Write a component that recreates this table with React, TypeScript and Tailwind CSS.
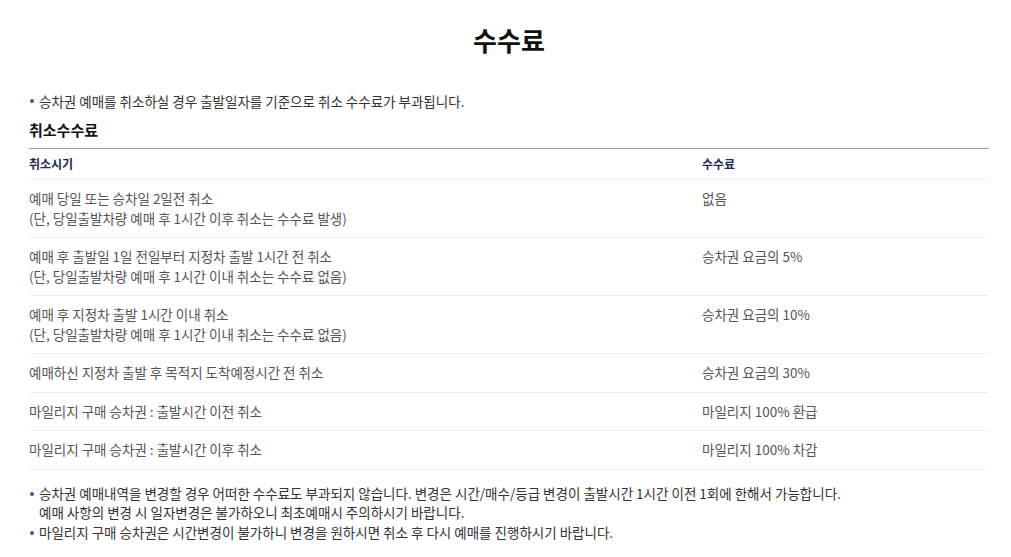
import React from "react";

const rows: { when: string[]; fee: string }[] = [
  { when: ["예매 당일 또는 승차일 2일전 취소", "(단, 당일출발차량 예매 후 1시간 이후 취소는 수수료 발생)"], fee: "없음" },
  { when: ["예매 후 출발일 1일 전일부터 지정차 출발 1시간 전 취소", "(단, 당일출발차량 예매 후 1시간 이내 취소는 수수료 없음)"], fee: "승차권 요금의 5%" },
  { when: ["예매 후 지정차 출발 1시간 이내 취소", "(단, 당일출발차량 예매 후 1시간 이내 취소는 수수료 없음)"], fee: "승차권 요금의 10%" },
  { when: ["예매하신 지정차 출발 후 목적지 도착예정시간 전 취소"], fee: "승차권 요금의 30%" },
  { when: ["마일리지 구매 승차권 : 출발시간 이전 취소"], fee: "마일리지 100% 환급" },
  { when: ["마일리지 구매 승차권 : 출발시간 이후 취소"], fee: "마일리지 100% 차감" },
];

function Bullet({ children }: { children: React.ReactNode }) {
  return (
    <div className="relative pl-[10px]">
      <span className="absolute left-[1px] top-[8px] w-[4px] h-[4px] rounded-full bg-[#2b5aa6]" />
      {children}
    </div>
  );
}

export default function App() {
  return (
    <div
      className="w-[1011px] h-[557px] bg-white overflow-hidden text-[#333]"
      style={{ fontFamily: '"Noto Sans CJK KR", "Noto Sans", sans-serif' }}
    >
      <div className="pl-[29px] pr-[22px]">
        <h1 className="text-center text-[26px] font-bold text-[#111] leading-[36px] pt-[22px]">수수료</h1>
        <div className="mt-[33px] text-[13.5px] leading-[20px]">
          <Bullet>승차권 예매를 취소하실 경우 출발일자를 기준으로 취소 수수료가 부과됩니다.</Bullet>
        </div>
        <h2 className="mt-[9px] text-[15px] font-bold text-[#111] leading-[20px]">취소수수료</h2>
        <div className="mt-[8px] border-t border-[#9ea2b3]">
          <div className="flex border-b border-[#eeeeee] h-[31px] items-center text-[12px] font-bold text-[#1c2a50]">
            <div className="w-[673px]">취소시기</div>
            <div>수수료</div>
          </div>
          {rows.map((r, i) => (
            <div key={i} className="flex border-b border-[#eeeeee] pt-[9px] pb-[9px] text-[13.5px] leading-[19.5px] text-[#555]">
              <div className="w-[673px]">
                {r.when.map((l, j) => (
                  <div key={j}>{l}</div>
                ))}
              </div>
              <div>{r.fee}</div>
            </div>
          ))}
        </div>
        <div className="mt-[14px] text-[13.5px] leading-[19.5px] text-[#333]">
          <Bullet>
            승차권 예매내역을 변경할 경우 어떠한 수수료도 부과되지 않습니다. 변경은 시간/매수/등급 변경이 출발시간 1시간 이전 1회에 한해서 가능합니다.
            <br />
            예매 사항의 변경 시 일자변경은 불가하오니 최초예매시 주의하시기 바랍니다.
          </Bullet>
          <Bullet>마일리지 구매 승차권은 시간변경이 불가하니 변경을 원하시면 취소 후 다시 예매를 진행하시기 바랍니다.</Bullet>
        </div>
      </div>
    </div>
  );
}
